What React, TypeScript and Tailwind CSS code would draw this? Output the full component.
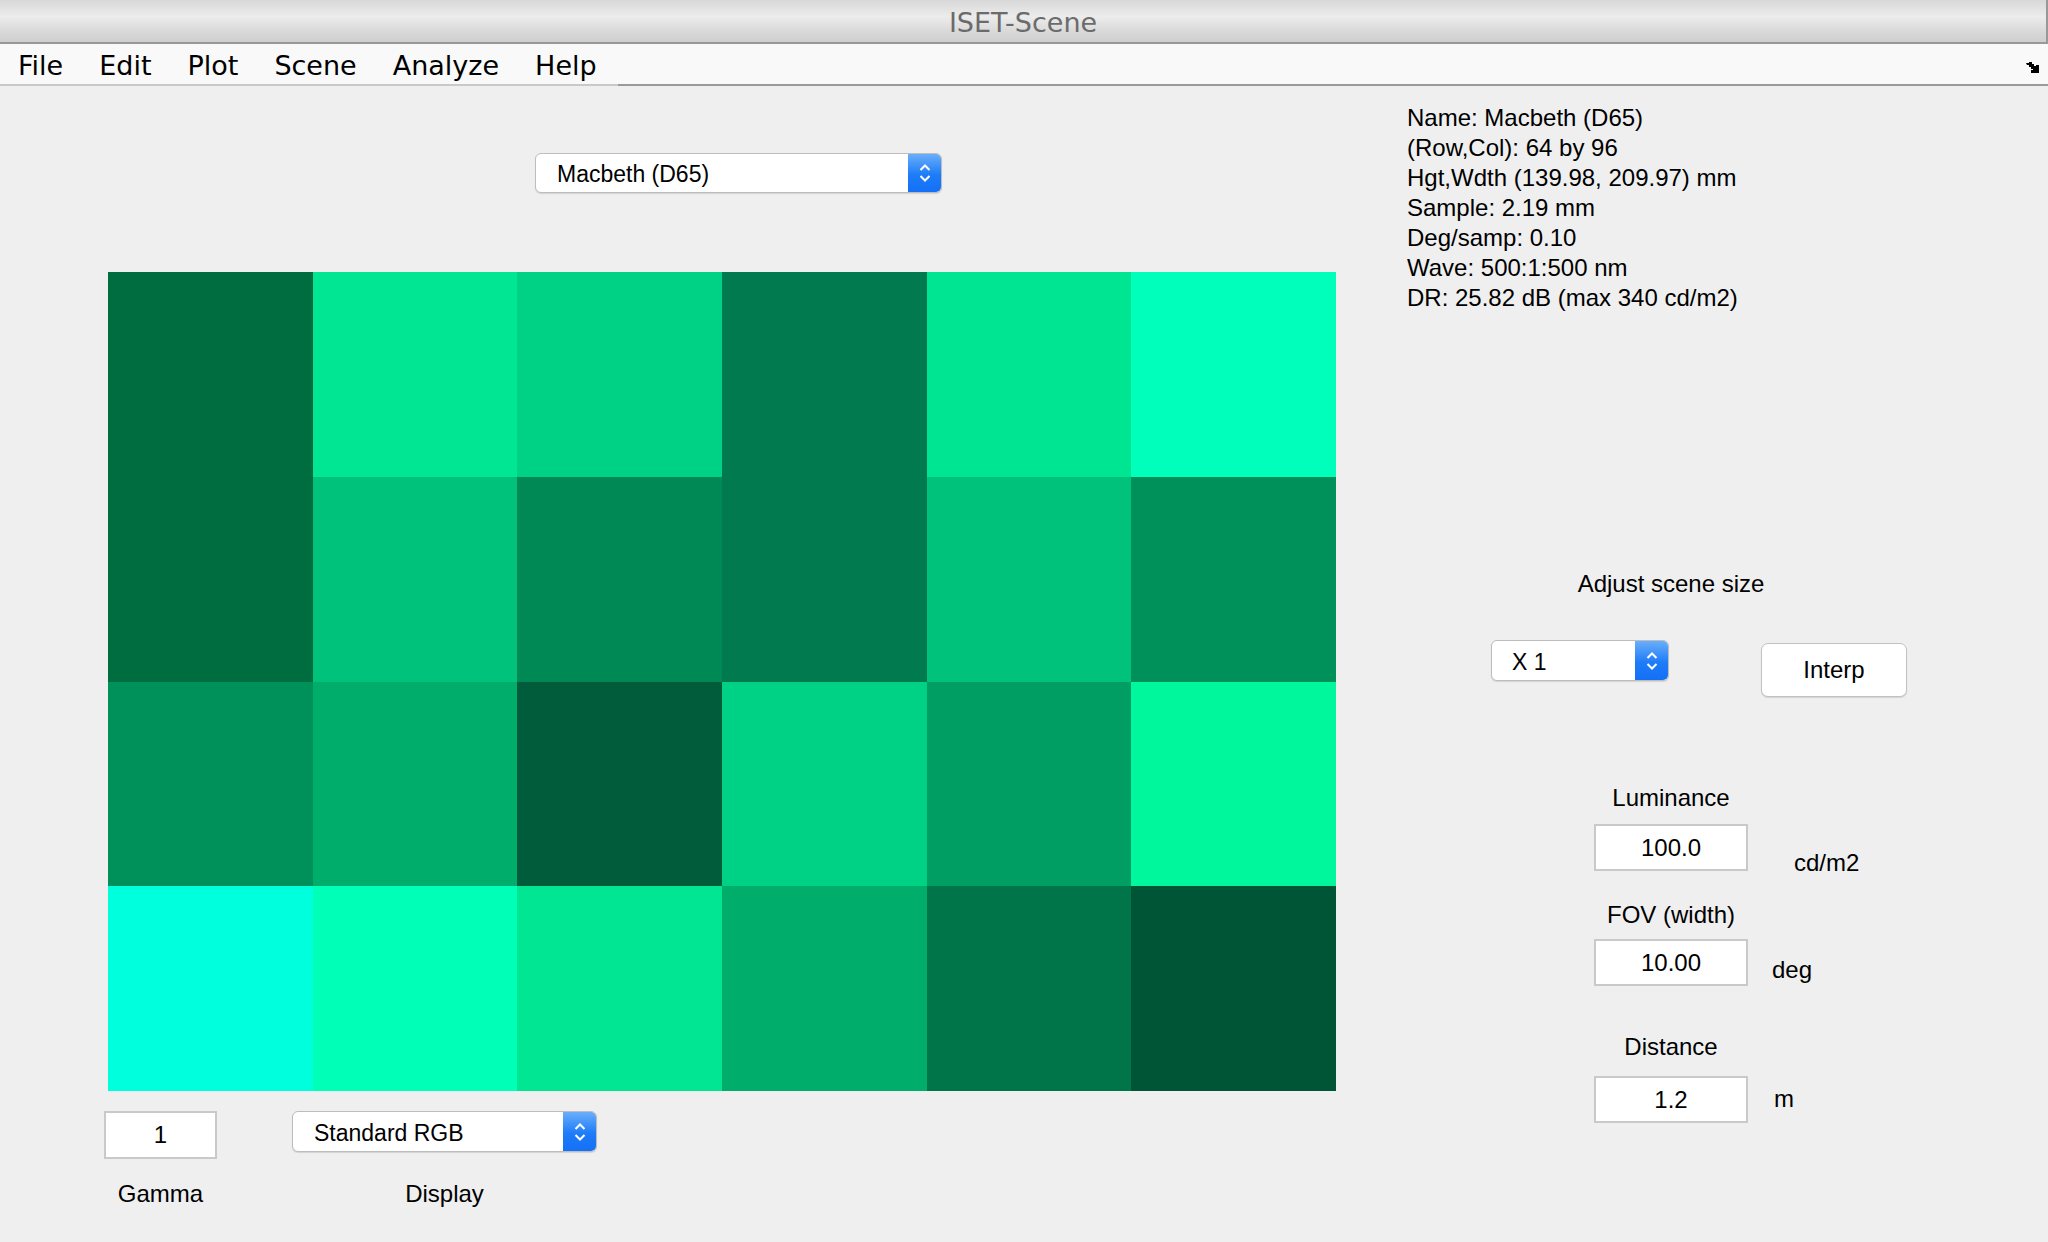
import React from "react";

const patches = [
  ["bg-[#006d41]", "bg-[#00e692]", "bg-[#00d285]", "bg-[#007a4e]", "bg-[#00e592]", "bg-[#00ffbb]"],
  ["bg-[#006d41]", "bg-[#00c27a]", "bg-[#008955]", "bg-[#007a4e]", "bg-[#00c27a]", "bg-[#00915a]"],
  ["bg-[#00915a]", "bg-[#00ad6b]", "bg-[#005c3a]", "bg-[#00d285]", "bg-[#009e62]", "bg-[#00f79c]"],
  ["bg-[#00ffdd]", "bg-[#00ffb7]", "bg-[#00e692]", "bg-[#00ad6b]", "bg-[#007549]", "bg-[#005536]"],
];

const info = [
  "Name: Macbeth (D65)",
  "(Row,Col): 64 by 96",
  "Hgt,Wdth (139.98, 209.97) mm",
  "Sample: 2.19 mm",
  "Deg/samp: 0.10",
  "Wave: 500:1:500 nm",
  "DR: 25.82 dB (max 340 cd/m2)",
];

const menus = ["File", "Edit", "Plot", "Scene", "Analyze", "Help"];

function Chevrons() {
  return (
    <svg width="14" height="24" viewBox="0 0 14 24" fill="none" stroke="white" strokeWidth="2">
      <path d="M2.5 9 L7 4.5 L11.5 9" />
      <path d="M2.5 15 L7 19.5 L11.5 15" />
    </svg>
  );
}

function Popup({ label, className, pad }: { label: string; className: string; pad: string }) {
  return (
    <div
      className={`flex rounded-[6px] border border-[#bdbdbd] bg-white overflow-hidden shadow-[0_1px_1px_rgba(0,0,0,0.12)] ${className}`}
    >
      <div className={`flex-1 flex items-center pt-[3px] text-[23px] text-black ${pad}`}>{label}</div>
      <div className="w-[33px] flex items-center justify-center bg-[linear-gradient(to_bottom,#6aaefb,#1d7cf8_55%,#1470f6)]">
        <Chevrons />
      </div>
    </div>
  );
}

function Field({ value, className = "" }: { value: string; className?: string }) {
  return (
    <div
      className={`h-[47px] flex items-center justify-center bg-white border-2 border-[#c9c9c9] text-[24px] text-black ${className}`}
    >
      {value}
    </div>
  );
}

export default function App() {
  return (
    <div className="w-[2048px] h-[1242px] bg-[#efefef] overflow-hidden font-['Liberation_Sans',Arial,sans-serif] text-black">
      {/* Title bar */}
      <div className="h-[44px] flex items-center justify-center border-b-2 border-r-2 border-[#989898] bg-[linear-gradient(to_bottom,#d8d8d8_0%,#ececec_40%,#d6d6d6_80%,#cfcfcf_100%)]">
        <span className="font-['DejaVu_Sans',sans-serif] text-[27px] text-[#6b6b6b] pt-[4px]">ISET-Scene</span>
      </div>

      {/* Menu bar */}
      <div className="h-[42px] flex flex-col bg-[#f9f9f9]">
        <div className="h-[40px] flex items-center pl-[18px] pt-[4px] gap-[36px] font-['DejaVu_Sans',sans-serif] text-[27px] text-black">
          {menus.map((m) => (
            <span key={m}>{m}</span>
          ))}
          <svg className="ml-auto mr-[8px] mt-[4px]" width="14" height="12" viewBox="0 0 14 12" fill="black">
            <path d="M0 1 H3 V0 H6 V2 H8 V4 H10 V3 H13 V11 H5 V8 H7 V7 H5 V5 H3 V3 H1 Z" />
          </svg>
        </div>
        <div className="h-[2px] flex">
          <div className="w-[618px] bg-[#c9c9c9]" />
          <div className="flex-1 bg-[#9a9a9a]" />
        </div>
      </div>

      {/* Body */}
      <div className="flex">
        {/* Left: scene image */}
        <div className="w-[1407px] flex flex-col">
          <Popup label="Macbeth (D65)" className="ml-[535px] mt-[67px] w-[407px] h-[40px]" pad="pl-[21px]" />

          <div className="ml-[108px] mt-[79px] w-[1228px] h-[819px] grid grid-cols-6 grid-rows-4">
            {patches.flat().map((c, i) => (
              <div key={i} className={c} />
            ))}
          </div>

          <div className="ml-[104px] mt-[20px] flex items-start">
            <div className="w-[113px] flex flex-col items-center">
              <Field value="1" className="w-[113px] h-[48px]" />
              <span className="mt-[21px] text-[24px] leading-[28px]">Gamma</span>
            </div>
            <div className="ml-[75px] w-[305px] flex flex-col items-center">
              <Popup label="Standard RGB" className="w-[305px] h-[41px]" pad="pl-[21px]" />
              <span className="mt-[28px] text-[24px] leading-[28px]">Display</span>
            </div>
          </div>
        </div>

        {/* Right: scene info and controls */}
        <div className="flex-1 flex flex-col">
          <div className="pt-[17px] text-[24px] leading-[30px]">
            {info.map((line) => (
              <div key={line}>{line}</div>
            ))}
          </div>

          <div className="ml-[187px] w-[154px] mt-[257px] flex flex-col items-center">
            <span className="text-[24px] leading-[28px] whitespace-nowrap">Adjust scene size</span>
          </div>

          <div className="ml-[84px] mt-[42px] flex items-start">
            <Popup label="X 1" className="w-[178px] h-[41px]" pad="pl-[20px]" />
            <button className="ml-[92px] mt-[3px] w-[146px] h-[54px] rounded-[7px] border border-[#c2c2c2] bg-white text-[24px] shadow-[0_1px_1px_rgba(0,0,0,0.12)]">
              Interp
            </button>
          </div>

          {/* Luminance */}
          <div className="ml-[187px] mt-[87px] flex items-start">
            <div className="w-[154px] flex flex-col items-center">
              <span className="text-[24px] leading-[28px] whitespace-nowrap">Luminance</span>
              <Field value="100.0" className="mt-[12px] w-[154px]" />
            </div>
            <span className="ml-[46px] mt-[65px] text-[24px] leading-[28px]">cd/m2</span>
          </div>

          {/* FOV */}
          <div className="ml-[187px] mt-[24px] flex items-start">
            <div className="w-[154px] flex flex-col items-center">
              <span className="text-[24px] leading-[28px] whitespace-nowrap">FOV (width)</span>
              <Field value="10.00" className="mt-[10px] w-[154px]" />
            </div>
            <span className="ml-[24px] mt-[55px] text-[24px] leading-[28px]">deg</span>
          </div>

          {/* Distance */}
          <div className="ml-[187px] mt-[47px] flex items-start">
            <div className="w-[154px] flex flex-col items-center">
              <span className="text-[24px] leading-[28px] whitespace-nowrap">Distance</span>
              <Field value="1.2" className="mt-[15px] w-[154px]" />
            </div>
            <span className="ml-[26px] mt-[52px] text-[24px] leading-[28px]">m</span>
          </div>
        </div>
      </div>
    </div>
  );
}
